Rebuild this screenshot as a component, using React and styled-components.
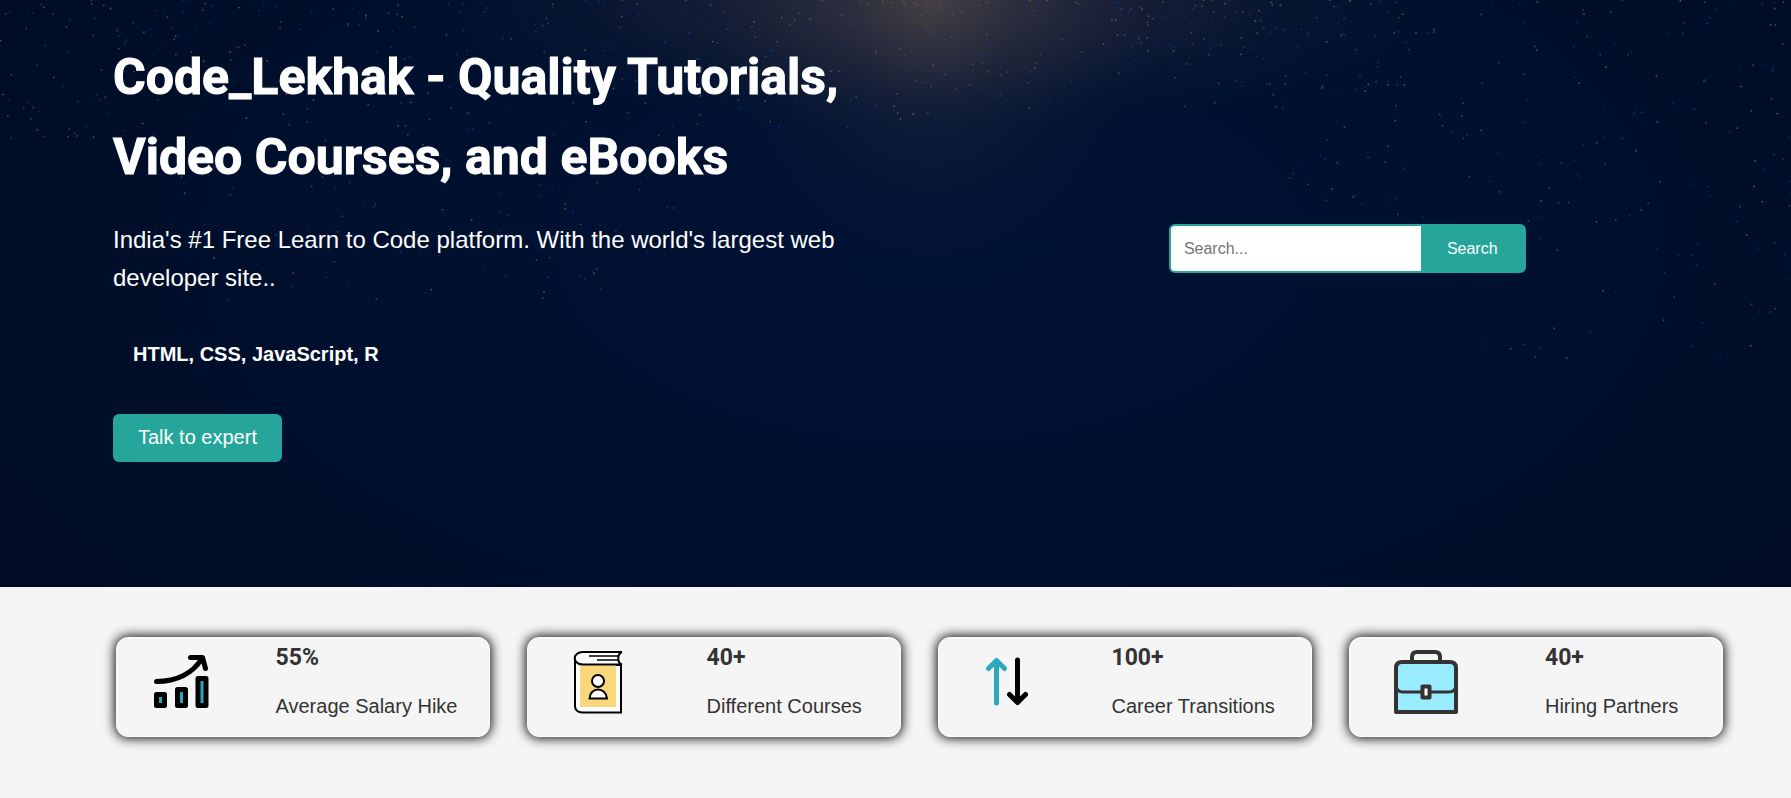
import React from 'react';
import styled, { createGlobalStyle } from 'styled-components';

const GlobalStyle = createGlobalStyle`
  * { box-sizing: border-box; }
  body {
    margin: 0;
    background: #f5f5f5;
    color: #333;
    font-family: "Liberation Sans", Arial, sans-serif;
    font-size: 20px;
  }
  h1, h2, p { margin: 0; }
`;

const Hero = styled.header`
  position: relative;
  display: grid;
  grid-template-columns: 1fr 1fr;
  column-gap: 16px;
  align-items: center;
  padding: 37px 0 125px;
  color: #fff;
  background:
    radial-gradient(ellipse 520px 130px at 52% 0, rgba(255, 190, 130, 0.14), rgba(255, 180, 120, 0.07) 45%, rgba(255, 180, 120, 0.02) 75%, transparent),
    radial-gradient(ellipse 220px 270px at 52% 0, rgba(255, 190, 120, 0.15), rgba(255, 190, 120, 0.06) 40%, rgba(255, 190, 120, 0.02) 75%, transparent),
    radial-gradient(ellipse 66% 105% at 52% 42%, #001235, #00102e 50%, #000b22);
`;

const Sky = styled.svg`
  position: absolute;
  inset: 0;
  width: 100%;
  height: 100%;
  pointer-events: none;
`;

const Intro = styled.div`
  position: relative;
  padding-left: 113px;
`;

const Title = styled.h1`
  font-family: Roboto, sans-serif;
  font-size: 50px;
  line-height: 80px;
  font-weight: 700;
  -webkit-text-stroke: 1px currentColor;
`;

const Lead = styled.p`
  margin-top: 24px;
  font-size: 24px;
  line-height: 38px;
`;

const Topics = styled.p`
  margin: 37px 20px 40px;
  line-height: 40px;
  font-weight: 700;
`;

const ExpertButton = styled.button`
  height: 48px;
  padding: 0 25px 2px;
  border: 0;
  border-radius: 6px;
  background: #26a69a;
  color: #fff;
  font: inherit;
`;

const SearchForm = styled.form`
  position: relative;
  display: flex;
  justify-self: center;
  margin-bottom: 2px;
  height: 49px;
  overflow: hidden;
  border: 2px solid #26a69a;
  border-radius: 6px;
  background: #26a69a;
`;

const SearchInput = styled.input`
  width: 250px;
  padding: 0 13px;
  border: 0;
  outline: 0;
  font: inherit;
  font-size: 16px;
  &::placeholder { color: #757575; }
`;

const SearchButton = styled.button`
  padding: 0 26px;
  border: 0;
  background: #26a69a;
  color: #fff;
  font: inherit;
  font-size: 16px;
`;

const Stats = styled.section`
  display: grid;
  grid-template-columns: repeat(4, 1fr);
  gap: 37px;
  padding: 50px 68px 60px 116px;
`;

const Card = styled.article`
  display: flex;
  align-items: center;
  justify-content: space-around;
  height: 100px;
  padding-bottom: 10px;
  border: 1px solid #fff;
  border-radius: 12px;
  background: #f5f5f5;
  box-shadow: 0 0 12px 1px #000;
`;

const Figure = styled.h2`
  font-family: Roboto, sans-serif;
  font-size: 23px;
  line-height: 48px;
  font-weight: 700;
`;

const Label = styled.p`
  line-height: 48px;
`;

const Icon = styled.svg.attrs({ viewBox: '0 0 64 64', 'aria-hidden': true })`
  flex: none;
  width: 64px;
  height: 64px;
`;

// Repeatable pseudo-random scatter: stars reach lower down toward the right.
const makeStars = (count) => {
  let seed = 41;
  const next = () => {
    seed = (seed * 16807) % 2147483647;
    return seed / 2147483647;
  };
  return Array.from({ length: count }, () => {
    const x = next();
    const depth = x < 0.1 ? 150 : x < 0.38 ? 300 : x < 0.52 ? 130 : x < 0.72 ? 110 : x < 0.82 ? 220 : 360;
    const y = Math.pow(next(), 1.4) * depth;
    return { x: x * 100, y, warm: next() > 0.5, glow: 0.6 + next() * 0.4 };
  });
};
const stars = makeStars(820);

function Stars() {
  return (
    <Sky aria-hidden="true">
      {stars.map((s, i) => (
        <circle key={i} cx={`${s.x}%`} cy={s.y} r="0.9" fill={s.warm ? '#6b5442' : '#073a86'} opacity={s.glow} />
      ))}
    </Sky>
  );
}

function ChartIcon() {
  return (
    <Icon>
      <g fill="#26a6bd" stroke="#000" strokeWidth="5" strokeLinejoin="round" strokeLinecap="round">
        <path d="M7.500 44.500h8v11h-8zM28.500 39.500h8v16h-8zM49 28.500h8v27h-8z" />
        <path fill="none" d="M7.500 31.500C28 31.500 44 23 52.500 9M41.500 7.500H53.500L56.500 18.500" />
      </g>
    </Icon>
  );
}

function BookIcon() {
  return (
    <Icon>
      <path d="M9 6v50q0 6 7 6.500h39V15H16Q9 13 9 6" fill="#fff" stroke="#000" strokeWidth="2" />
      <path d="M14 15h36v42H14z" fill="#fbd77c" />
      <path d="M56 2H17C6 2 6 14.500 17 14.500H56C51 13 51 4 56 2" fill="#fff" stroke="#000" strokeWidth="2" />
      <path d="M23 6h29M31 10h21" stroke="#000" strokeWidth="1.500" />
      <circle cx="32" cy="31" r="6" fill="#fff" stroke="#000" strokeWidth="2" />
      <path d="M23.500 48.500C24 36.500 40 36.500 41 48.500z" fill="#fff" stroke="#000" strokeWidth="2" />
    </Icon>
  );
}

function ArrowsIcon() {
  return (
    <Icon fill="none" strokeWidth="5" strokeLinecap="round" strokeLinejoin="round">
      <path stroke="#2ca9bc" d="M21.500 53V11M13.500 18.500l8-8 8 8" />
      <path stroke="#000" d="M42.500 10v42M34.500 44.500l8 8 8-8" />
    </Icon>
  );
}

function BriefcaseIcon() {
  return (
    <Icon stroke="#333" strokeWidth="4" strokeLinejoin="round">
      <path d="M18 12V7q0-5 5-5h18q5 0 5 5v5" fill="none" />
      <path d="M2 62V18q0-6 6-6h48q6 0 6 6v44z" fill="#99ebff" />
      <path d="M2 36q1 6 7 6h46q6 0 7-6" fill="none" strokeWidth="3" />
      <path d="M28.500 36.500h7v11h-7z" fill="#fff" />
    </Icon>
  );
}

const stats = [
  { figure: '55%', label: 'Average Salary Hike', Picture: ChartIcon },
  { figure: '40+', label: 'Different Courses', Picture: BookIcon },
  { figure: '100+', label: 'Career Transitions', Picture: ArrowsIcon },
  { figure: '40+', label: 'Hiring Partners', Picture: BriefcaseIcon },
];

export default function App() {
  return (
    <>
      <GlobalStyle />
      <Hero>
        <Stars />
        <Intro>
          <Title>Code_Lekhak - Quality Tutorials, Video Courses, and eBooks</Title>
          <Lead>India's #1 Free Learn to Code platform. With the world's largest web developer site..</Lead>
          <Topics>HTML, CSS, JavaScript, R</Topics>
          <ExpertButton type="button">Talk to expert</ExpertButton>
        </Intro>
        <SearchForm role="search" onSubmit={(e) => e.preventDefault()}>
          <SearchInput type="text" placeholder="Search..." aria-label="Search" />
          <SearchButton type="submit">Search</SearchButton>
        </SearchForm>
      </Hero>
      <Stats>
        {stats.map(({ figure, label, Picture }) => (
          <Card key={label}>
            <Picture />
            <div>
              <Figure>{figure}</Figure>
              <Label>{label}</Label>
            </div>
          </Card>
        ))}
      </Stats>
    </>
  );
}
